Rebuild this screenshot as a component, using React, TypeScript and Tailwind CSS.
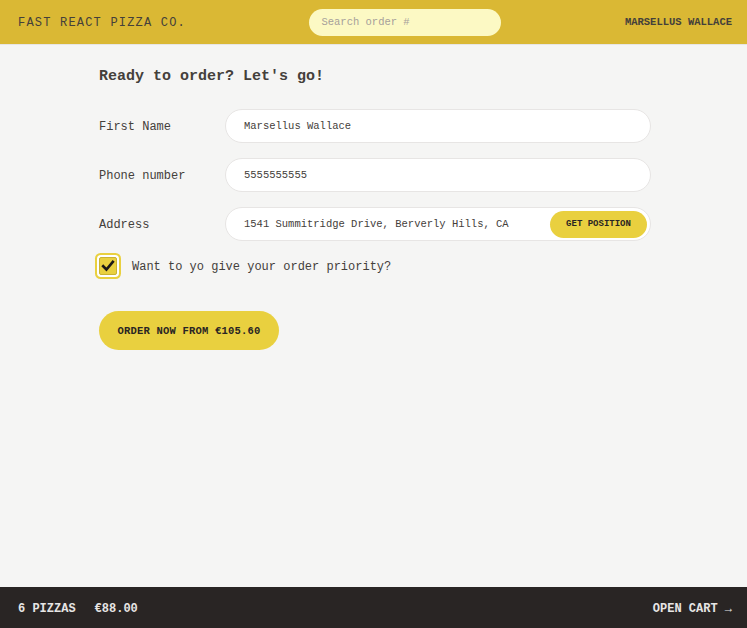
import React from 'react';

const mono = { fontFamily: '"Liberation Mono", "DejaVu Sans Mono", monospace' };

function Field({ label, value, children }: { label: string; value: string; children?: React.ReactNode }) {
  return (
    <div className="flex items-center">
      <label className="w-[126px] shrink-0 pt-[2px] text-[12px] text-stone-700">{label}</label>
      <div className="relative flex h-[34px] flex-1 items-center rounded-full border border-stone-200 bg-white pl-[18px]">
        <span className="pt-[2px] text-[10.5px] text-stone-700">{value}</span>
        {children}
      </div>
    </div>
  );
}

export default function App() {
  return (
    <div className="flex h-screen flex-col bg-[#f5f5f4] text-stone-700" style={mono}>
      <header className="flex h-[45px] shrink-0 items-center justify-between border-b border-stone-200 bg-[#dab834] pl-[18px] pr-[15px]">
        <span className="pt-[2px] text-[12px] tracking-[1.2px] text-stone-700">FAST REACT PIZZA CO.</span>
        <div className="flex h-[27px] w-[192px] items-center rounded-full bg-[#fcf9c4] px-[12px] pt-[2px]">
          <span className="text-[10.5px] text-stone-400">Search order #</span>
        </div>
        <span className="pt-[2px] text-[10.5px] font-semibold text-stone-700">MARSELLUS WALLACE</span>
      </header>

      <main className="flex-1 overflow-hidden">
        <div className="mx-auto w-[555px] pl-[3px] pt-[21px]">
          <h2 className="mb-[22px] text-[15px] font-semibold leading-[21px] text-stone-700">Ready to order? Let's go!</h2>

          <div className="flex flex-col gap-[15px]">
            <Field label="First Name" value="Marsellus Wallace" />
            <Field label="Phone number" value="5555555555" />
            <Field label="Address" value="1541 Summitridge Drive, Berverly Hills, CA">
              <button className="absolute right-[3px] top-[3px] h-[27px] w-[97px] rounded-full bg-[#e9d03f] pt-[1px] text-[9px] font-semibold text-stone-800">
                GET POSITION
              </button>
            </Field>
          </div>

          <div className="mt-[15px] flex items-center gap-[15px]">
            <div className="flex h-[18px] w-[18px] items-center justify-center rounded-[2px] border border-[#c9b233] bg-[#e9d03f] ring-2 ring-[#e9d03f] ring-offset-[2px]">
              <svg width="14" height="14" viewBox="0 0 16 16">
                <path d="M2.5 8.2 L6.2 12 L13.5 3.2" fill="none" stroke="#1c1917" strokeWidth="3" strokeLinecap="square" />
              </svg>
            </div>
            <label className="pt-[2px] text-[12px] font-medium text-stone-700">Want to yo give your order priority?</label>
          </div>

          <button className="mt-[35px] h-[39px] w-[180px] rounded-full bg-[#e9d03f] pt-[2px] text-[10.5px] font-semibold tracking-[0.2px] text-stone-800">
            ORDER NOW FROM €105.60
          </button>
        </div>
      </main>

      <footer className="flex h-[41px] shrink-0 items-center justify-between bg-[#292524] pl-[18px] pr-[15px] pt-[2px] text-[12px] font-semibold text-stone-200">
        <p className="flex gap-[19px]">
          <span>6 PIZZAS</span>
          <span>€88.00</span>
        </p>
        <span>OPEN CART &rarr;</span>
      </footer>
    </div>
  );
}
